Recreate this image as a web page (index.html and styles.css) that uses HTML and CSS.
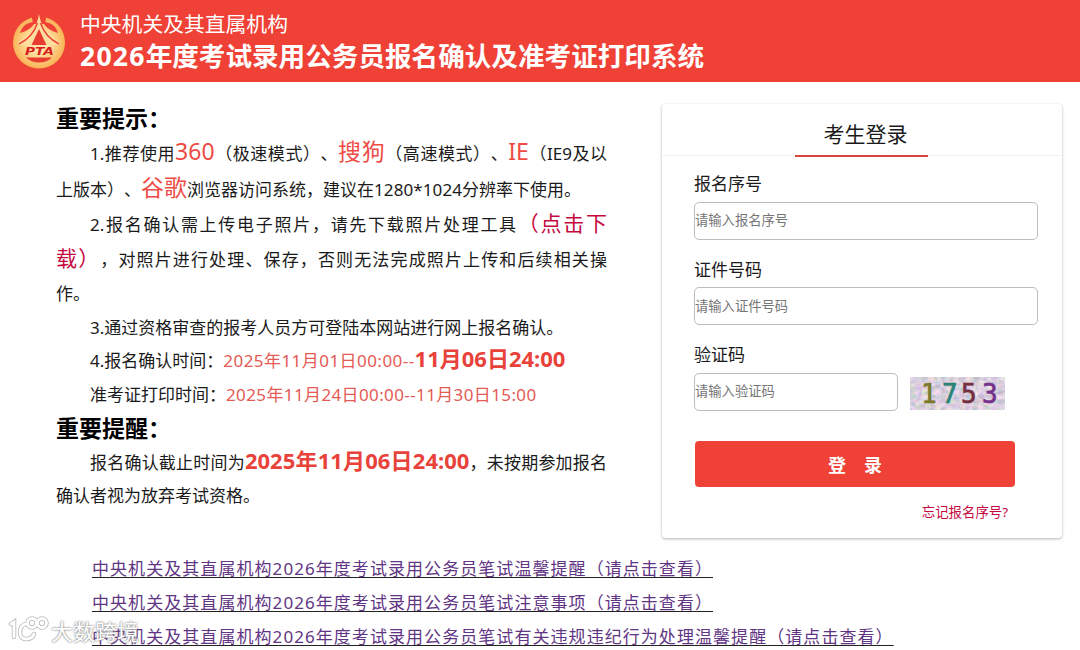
FILE: index.html
```html
<!DOCTYPE html>
<html lang="zh-CN">
<head>
    <meta charset="UTF-8">
    <title>报名确认及准考证打印系统</title>
    <link rel="stylesheet" href="styles.css">
</head>
<body>
    <div class="header">
        <svg class="logo" width="54" height="54" viewBox="0 0 54 54">
            <defs>
                <radialGradient id="gold">
                    <stop offset="0.4" stop-color="#ffe3a6"/>
                    <stop offset="1" stop-color="#f9b355"/>
                </radialGradient>
            </defs>
            <circle cx="27" cy="27.500" r="26" fill="url(#gold)"/>
            <!-- gap behind the peak -->
            <path d="M20 0h14v3l-1 6h-12l-1 -6z" fill="#ef4136"/>
            <!-- leaves on both sides -->
            <path d="M8 18C10 11 15 7.500 22 7L22.500 8C20 13 14 16.500 8 18z" fill="#ef4136"/>
            <path d="M46 18C44 11 39 7.500 32 7L31.500 8C34 13 40 16.500 46 18z" fill="#ef4136"/>
            <!-- roof -->
            <path d="M27 -1C25.500 10 19 21 6 27l1 3h40l1-3C35 21 28.500 10 27 -1z" fill="#ffdfa0"/>
            <path d="M25.500 8C22.500 17 17 24 7 29M28.500 8C31.500 17 37 24 47 29" fill="none" stroke="#ef4136" stroke-width="1.500"/>
            <path d="M27 14l-7.500 16h15z" fill="#e83c30"/>
            <path d="M14 42.500h26c-3 3-7.500 5-13 5s-10-2-13-5z" fill="#e83c30"/>
            <text x="27.500" y="39.500" text-anchor="middle" textLength="29" lengthAdjust="spacingAndGlyphs" class="logo-text">PTA</text>
        </svg>
        <div class="header-text">
            <div class="sub-title">中央机关及其直属机构</div>
            <h1 class="title"><span class="year">2026</span>年度考试录用公务员报名确认及准考证打印系统</h1>
        </div>
    </div>

    <div class="main">
        <div class="notice">
            <h2>重要提示：</h2>
            <div class="line indent full">1.推荐使用<span class="big">360</span>（极速模式）、<span class="big">搜狗</span>（高速模式）、<span class="big">IE</span>（IE9及以</div>
            <div class="line tall">上版本）、<span class="big">谷歌</span>浏览器访问系统，建议在<span class="num">1280*1024</span>分辨率下使用。</div>
            <div class="line indent full">2.报名确认需上传电子照片，请先下载照片处理工具<a class="download">（点击下</a></div>
            <div class="line full"><a class="download">载）</a>，对照片进行处理、保存，否则无法完成照片上传和后续相关操</div>
            <div class="line short">作。</div>
            <div class="line indent short">3.通过资格审查的报考人员方可登陆本网站进行网上报名确认。</div>
            <div class="line indent short">4.报名确认时间：<span class="red">2025年11月01日00:00--</span><b>11月06日24:00</b></div>
            <div class="line indent short">准考证打印时间：<span class="red print-time">2025年11月24日00:00--11月30日15:00</span></div>
            <h2>重要提醒：</h2>
            <div class="line indent short full">报名确认截止时间为<b>2025年11月06日24:00</b>，未按期参加报名</div>
            <div class="line short">确认者视为放弃考试资格。</div>
        </div>

        <div class="login">
            <div class="login-head"><span class="tab">考生登录</span></div>
            <form class="form">
                <label>报名序号</label>
                <input type="text" placeholder="请输入报名序号">
                <label>证件号码</label>
                <input type="text" placeholder="请输入证件号码">
                <label>验证码</label>
                <div class="code-row">
                    <input type="text" class="code" placeholder="请输入验证码">
                    <svg class="captcha" width="95" height="33" viewBox="0 0 95 33">
                        <filter id="noise" x="0" y="0" width="100%" height="100%">
                            <feTurbulence type="fractalNoise" baseFrequency="0.16 0.22" numOctaves="3" seed="4"/>
                            <feColorMatrix values="0.7 0 0 0 0.36  0.35 0.4 0 0 0.26  0.3 0 0.4 0 0.38  0 0 0 0 1"/>
                        </filter>
                        <rect width="95" height="33" filter="url(#noise)"/>
                        <text x="11" y="26" fill="#7b7a2c" stroke="#7b7a2c">1</text>
                        <text x="32" y="26" fill="#2c8275" stroke="#2c8275">7</text>
                        <text x="51" y="26" fill="#74303f" stroke="#74303f">5</text>
                        <text x="72" y="26" fill="#75308c" stroke="#75308c">3</text>
                    </svg>
                </div>
                <button type="button" class="submit">登　录</button>
                <a class="forget">忘记报名序号?</a>
            </form>
        </div>
    </div>

    <div class="links">
        <a>中央机关及其直属机构2026年度考试录用公务员笔试温馨提醒（请点击查看）</a>
        <a>中央机关及其直属机构2026年度考试录用公务员笔试注意事项（请点击查看）</a>
        <a>中央机关及其直属机构2026年度考试录用公务员笔试有关违规违纪行为处理温馨提醒（请点击查看）</a>
    </div>

    <div class="watermark">
        <svg width="43" height="30" viewBox="0 0 43 30">
            <g fill="none" stroke="#bbb" stroke-width="4.500" stroke-linecap="round">
                <path d="M3 8l3-2v15M18 8c-8 1-8 15 0 15 4 0 7-2 8-5"/>
                <circle cx="24" cy="7" r="4.500"/><circle cx="34" cy="7" r="4.500"/>
            </g>
            <g fill="none" stroke="#fff" stroke-width="2.800" stroke-linecap="round">
                <path d="M3 8l3-2v15M18 8c-8 1-8 15 0 15 4 0 7-2 8-5"/>
                <circle cx="24" cy="7" r="4.500"/><circle cx="34" cy="7" r="4.500"/>
            </g>
        </svg>
        <span>大数跨境</span>
    </div>
</body>
</html>
```
FILE: styles.css
```css
* {
    box-sizing: border-box;
}
body {
    margin: 0;
    height: 650px;
    overflow: hidden;
    background: #fff;
    color: #1a1a1a;
    font-family: "Noto Sans", "Noto Sans CJK SC", sans-serif;
    font-size: 17px;
    text-spacing-trim: space-all;
}
.header {
    display: flex;
    height: 82px;
    padding: 15px 0 0 12px;
    background: #ef4136;
    color: #fff;
}
.logo {
    overflow: visible;
}
.logo-text {
    font: bold italic 10px "DejaVu Sans", sans-serif;
    fill: #d81e1e;
}
.header-text {
    margin: -7px 0 0 14px;
}
.sub-title {
    font-size: 20.8px;
    line-height: 32px;
}
.title {
    margin: 0;
    font-size: 26.6px;
    line-height: 32px;
    white-space: nowrap;
}
.year {
    letter-spacing: 1.2px;
}

/* notice */
.main {
    display: flex;
    justify-content: space-between;
    height: 457px;
    padding: 20px 18px 0 56px;
}
.notice {
    width: 551px;
}
.notice h2 {
    margin: 0;
    height: 34px;
    font-size: 23px;
    line-height: 33px;
    color: #000;
}
.line {
    height: 35px;
    line-height: 35px;
    white-space: nowrap;
}
.line.tall {
    height: 36px;
    line-height: 37px;
}
.line.short {
    height: 33.7px;
    line-height: 34px;
}
.indent {
    padding-left: 34px;
}
.full {
    white-space: normal;
    text-align-last: justify;
}
.big {
    font-size: 23px;
    line-height: 1;
    color: #ee4b45;
}
.num {
    letter-spacing: 0.1px;
}
.download {
    font-size: 21px;
    line-height: 1;
    color: #c5093f;
}
.red {
    color: #e45a54;
    letter-spacing: 0.45px;
}
.print-time {
    letter-spacing: 0.38px;
}
.line b {
    font-size: 22px;
    line-height: 1;
    color: #e8423a;
}

/* login box */
.login {
    width: 400px;
    height: 434px;
    margin-top: 2px;
    border-radius: 4px;
    box-shadow: 0 1px 3px rgba(0, 0, 0, 0.3);
}
.login-head {
    display: flex;
    height: 52px;
    padding-left: 133px;
    border-bottom: 1px solid #f2f2f2;
}
.tab {
    width: 133px;
    height: 53px;
    padding-left: 8px;
    border-bottom: 2px solid #d9443d;
    font-size: 21px;
    line-height: 60px;
    text-align: center;
}
.form {
    display: flex;
    flex-direction: column;
    padding: 11px 23px 0 32px;
}
.form label {
    height: 34.5px;
    line-height: 34px;
}
.form input {
    width: 344px;
    height: 38px;
    margin-bottom: 13px;
    padding: 0 0 1px;
    border: 1px solid #bdbdbd;
    border-radius: 5px;
    font: 13.3px "Noto Sans", "Noto Sans CJK SC", sans-serif;
}
.form input::placeholder {
    color: #757575;
}
.code-row {
    display: flex;
    gap: 12px;
}
.form .code {
    width: 204px;
}
.captcha {
    margin-top: 4px;
    font: 26px "DejaVu Sans Mono", monospace;
    stroke-width: 0.7px;
}
.submit {
    width: 320px;
    height: 46px;
    margin: 17px 0 0 1px;
    border: 0;
    border-radius: 4px;
    background: #ef4136;
    color: #fff;
    font: bold 18px "Noto Sans CJK SC", sans-serif;
}
.forget {
    margin: 15px 31px 0 0;
    font-size: 13.4px;
    line-height: 20px;
    text-align: right;
    color: #c5093f;
}

/* links */
.links {
    padding: 13px 0 0 92px;
}
.links a {
    display: block;
    width: max-content;
    height: 34px;
    line-height: 34px;
    letter-spacing: 1.06px;
    white-space: nowrap;
    color: #613584;
    text-decoration: underline #222 1px;
    text-underline-offset: 2px;
}
.watermark {
    position: absolute;
    left: 8px;
    bottom: 4px;
    display: flex;
    align-items: center;
    color: #fff;
    font-size: 22px;
    line-height: 30px;
    text-shadow: 0 0 2px #888, 0 0 2px #999;
}
```
